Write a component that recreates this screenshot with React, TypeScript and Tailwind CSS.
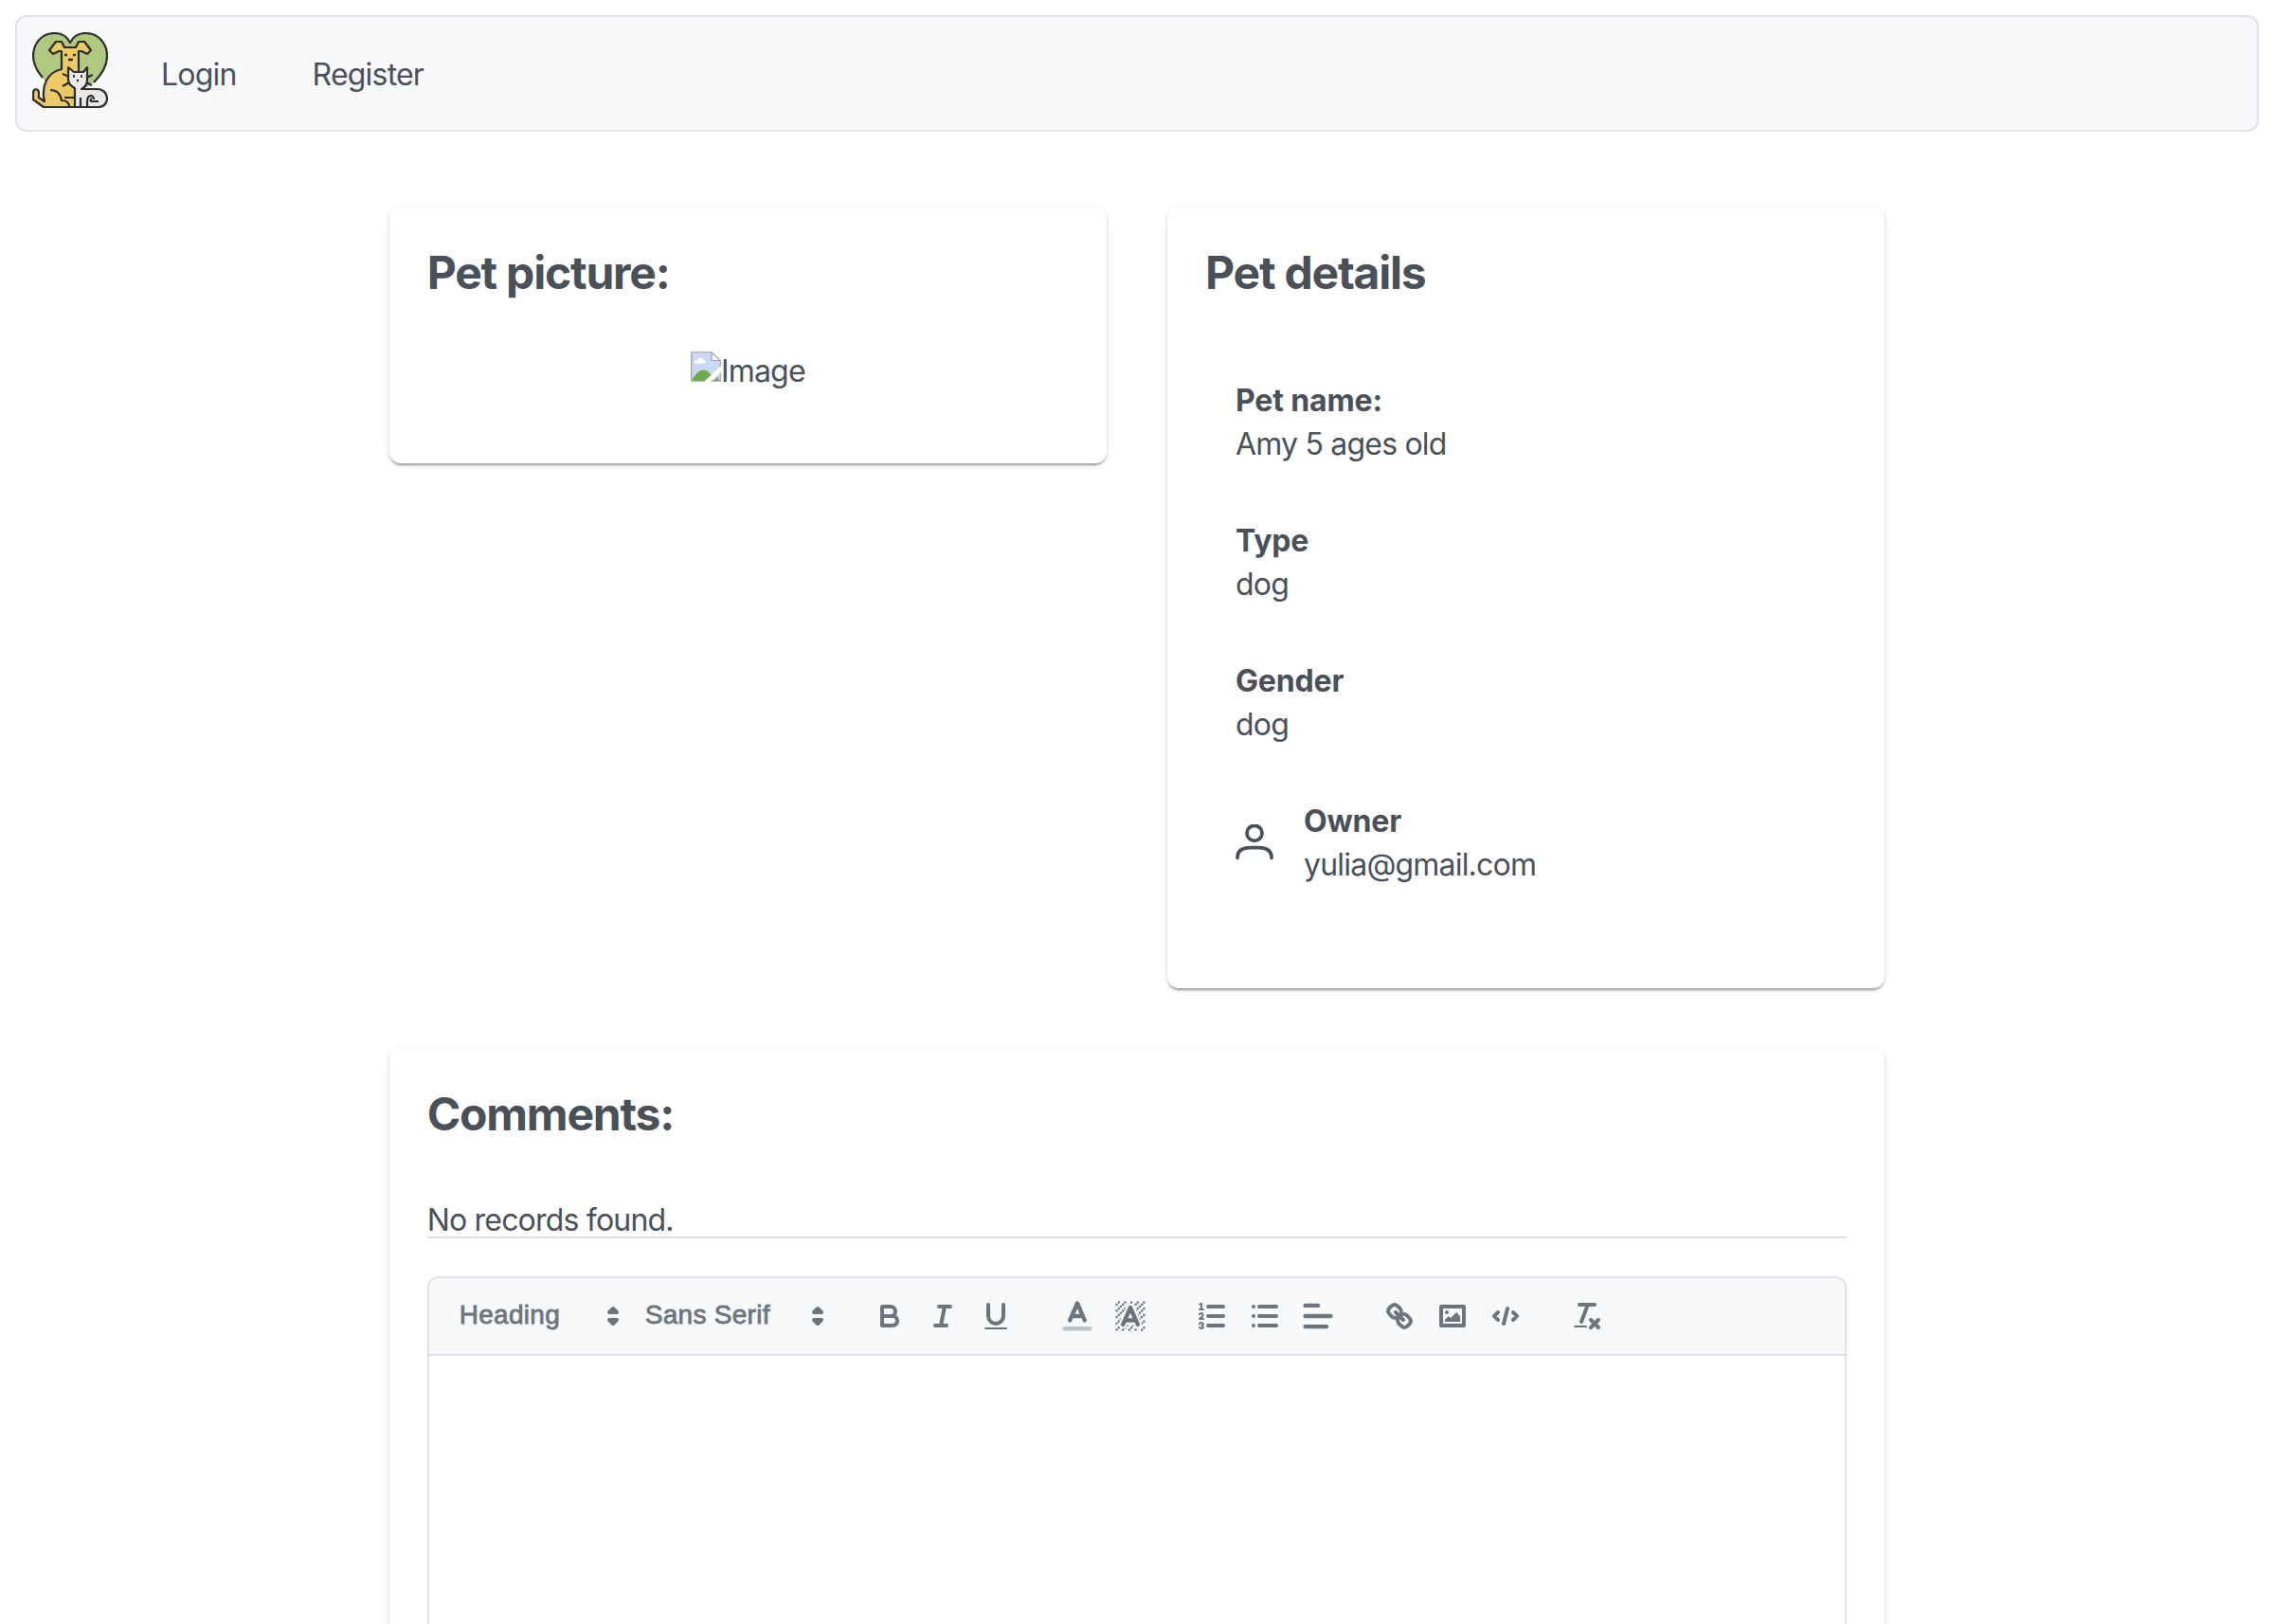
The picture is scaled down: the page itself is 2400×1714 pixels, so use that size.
import React from "react";

const Stroke = ({ children, size = "size-9" }: { children: React.ReactNode; size?: string }) => (
  <svg
    viewBox="0 0 18 18"
    className={`${size} shrink-0`}
    fill="none"
    stroke="currentColor"
    strokeWidth="2"
    strokeLinecap="round"
    strokeLinejoin="round"
  >
    {children}
  </svg>
);

const Fill = ({ children }: { children: React.ReactNode }) => (
  <g fill="currentColor" stroke="none">
    {children}
  </g>
);

const hatch: [number, number][] = [
  [4, 4], [2, 6], [3, 5], [4, 7], [2, 12], [2, 9], [2, 15], [3, 8], [12, 2], [11, 3], [2, 3], [6, 2], [3, 2],
  [5, 3], [9, 2], [15, 14], [13, 7], [15, 5], [14, 6], [15, 8], [14, 9], [14, 3], [15, 2], [12, 5], [13, 4],
  [9, 14], [8, 15], [5, 15], [11, 15], [14, 15], [15, 11],
];

const groups: React.ReactNode[][] = [
  [
    <Stroke key="bold">
      <path d="M5,4H9.5A2.5,2.5,0,0,1,12,6.5v0A2.5,2.5,0,0,1,9.5,9H5V4Z" />
      <path d="M5,9h5.5A2.5,2.5,0,0,1,13,11.5v0A2.5,2.5,0,0,1,10.5,14H5V9Z" />
    </Stroke>,
    <Stroke key="italic">
      <path d="M7 4H13M5 14H11M8 14L10 4" />
    </Stroke>,
    <Stroke key="underline">
      <path d="M5,3V9a4.012,4.012,0,0,0,4,4H9a4.012,4.012,0,0,0,4-4V3" />
      <Fill><rect height="1" rx="0.5" width="12" x="3" y="15" /></Fill>
    </Stroke>,
  ],
  [
    <Stroke key="color" size="size-10">
      <path d="M3 15H15" opacity="0.4" />
      <path d="M5.5 11L9 3L12.5 11M11.63 9H6.38" />
    </Stroke>,
    <Stroke key="background" size="size-10">
      <Fill>
        {hatch.map(([x, y]) => (
          <rect key={`${x}-${y}`} x={x} y={y} width="1" height="1" />
        ))}
        <polygon points="6 6.868 6 6 5 6 5 7 5.942 7 6 6.868" />
        <polygon points="6.817 5 6 5 6 6 6.38 6 6.817 5" />
        <polygon points="4 11.439 4 11 3 11 3 12 3.755 12 4 11.439" />
        <polygon points="4.63 10 4 10 4 11 4.192 11 4.63 10" />
        <path d="M10.832,4.2L11,4.582V4H10.708A1.948,1.948,0,0,1,10.832,4.2Z" />
        <path d="M7,4.582L7.168,4.2A1.929,1.929,0,0,1,7.292,4H7V4.582Z" />
        <path d="M8,13H7.683l-0.351.8a1.933,1.933,0,0,1-.124.2H8V13Z" />
        <path d="M9,3H8V3.282A1.985,1.985,0,0,1,9,3Z" />
        <polygon points="13.447 10.174 13.808 11 14 11 14 10 13.37 10 13.447 10.174" />
        <path d="M3.775,14H3v1H4V14.314A1.97,1.97,0,0,1,3.775,14Z" />
        <polygon points="12 6.868 12 6 11.62 6 12 6.868" />
        <polygon points="12.933 9 13 9 13 8 12.495 8 12.933 9" />
        <path d="M6,14.926V15H7V14.316A1.993,1.993,0,0,1,6,14.926Z" />
        <path d="M10.668,13.8L10.317,13H10v1h0.792A1.947,1.947,0,0,1,10.668,13.8Z" />
        <path d="M14.332,12.2a1.99,1.99,0,0,1,.166.8H15V12H14.245Z" />
      </Fill>
      <path d="M5.5 13L9 5L12.5 13M11.63 11H6.38" />
    </Stroke>,
  ],
  [
    <Stroke key="ordered">
      <path d="M7 4H15M7 9H15M7 14H15" />
      <g strokeWidth="1">
        <path d="M2.5 5.5H4.5" />
        <path d="M4.5,10.5h-2c0-.234,1.85-1.076,1.85-2.234A0.959,0.959,0,0,0,2.5,8.156" />
        <path d="M2.5,14.846a0.959,0.959,0,0,0,1.85-.109A0.7,0.7,0,0,0,3.75,14a0.688,0.688,0,0,0,.6-0.736,0.959,0.959,0,0,0-1.85-.109" />
      </g>
      <Fill>
        <path d="M3.5,6A0.5,0.5,0,0,1,3,5.5V3.085l-0.276.138A0.5,0.5,0,0,1,2.053,3c-0.124-.247-0.023-0.324.224-0.447l1-.5A0.5,0.5,0,0,1,4,2.5v3A0.5,0.5,0,0,1,3.5,6Z" />
      </Fill>
    </Stroke>,
    <Stroke key="bullet">
      <path d="M6 4H15M6 9H15M6 14H15M3 4H3M3 9H3M3 14H3" />
    </Stroke>,
    <Stroke key="align" size="size-10">
      <path d="M3 9H15M3 14H13M3 4H9" />
    </Stroke>,
  ],
  [
    <Stroke key="link">
      <path d="M7 7L11 11" />
      <path d="M8.9,4.577a3.476,3.476,0,0,1,.36,4.679A3.476,3.476,0,0,1,4.577,8.9C3.185,7.5,2.035,6.4,4.217,4.217S7.5,3.185,8.9,4.577Z" />
      <path d="M13.423,9.1a3.476,3.476,0,0,0-4.679-.36,3.476,3.476,0,0,0,.36,4.679c1.392,1.392,2.5,2.542,4.679.36S14.815,10.5,13.423,9.1Z" />
    </Stroke>,
    <Stroke key="image">
      <rect height="10" width="12" x="3" y="4" />
      <Fill>
        <circle cx="6" cy="7" r="1" />
        <polygon points="5 12 5 11 7 9 8 10 11 7 13 9 13 12" />
      </Fill>
    </Stroke>,
    <Stroke key="code">
      <path d="M5 7L3 9L5 11M13 7L15 9L13 11M10 5L8 13" />
    </Stroke>,
  ],
  [
    <Stroke key="clean">
      <path d="M5 3H13M6 12L9.35 3M11 11L15 15M15 11L11 15" />
      <Fill><rect height="1" rx="0.5" width="7" x="2" y="14" /></Fill>
    </Stroke>,
  ],
];

const Picker = ({ label, width }: { label: string; width: string }) => (
  <div className={`${width} flex h-12 items-center justify-between pl-4`}>
    <span className="pb-0.5 font-['Liberation_Sans',sans-serif] text-[28px] leading-[44px] tracking-[0.3px] [-webkit-text-stroke:0.8px_currentColor]">
      {label}
    </span>
    <Stroke>
      <polygon points="7 11 9 13 11 11" fill="currentColor" />
      <polygon points="7 7 9 5 11 7" fill="currentColor" />
    </Stroke>
  </div>
);

const Logo = () => (
  <svg viewBox="0 0 80 80" className="size-20 shrink-0" fill="none" stroke="#2d2d2d" strokeWidth="2.2" strokeLinejoin="round">
    <path
      d="M11 48C5 41 1 33 1 25C1 11 11 1 23.500 1C31 1 37 5 40 11C43 5 49 1 56.500 1C69 1 79 11 79 25C79 35 73 45 65 53L52 62H20Z"
      fill="#afca7e"
      stroke="none"
    />
    <path d="M11 48C5 41 1 33 1 25C1 11 11 1 23.500 1C31 1 37 5 40 11C43 5 49 1 56.500 1C69 1 79 11 79 25C79 35 73 45 65 53" />
    <path
      d="M31 39V20H28L22 23L18 19L25 10H31L34 16H46L49 10H55L62 19L58 23L52 20H49V42L46 79H12L1 71V64C1 59 7 59 7 64V69L13 73C9 57 16 42 31 39Z"
      fill="#eccb66"
    />
    <path d="M19 61C27 61 30 66 31 72C36 72 39 74 39 79M34 69H44" />
    <path
      d="M45 79V59C41 57 38 54 38 50V37L44 42H54L58 37V50C58 55 56 58 52 60H69C75 60 79 65 79 70C79 75 75 79 70 79Z"
      fill="#e9e9eb"
    />
    <path d="M12 79H70M51 79V69M58 79V73C58 66 65 65 65 71M70 73H63C61 73 61 71 63 70" />
    <path d="M39 47L32 44M39 53L32 57M57 48L64 45M57 53L63 56" />
    <path d="M34 24H37M43 24H46M38 29H43M43 46.500H45M51 46.500H53M47 51H49" strokeWidth="2.500" />
  </svg>
);

const BrokenImage = () => (
  <svg viewBox="0 0 32 32" className="mt-0.5 size-8 shrink-0">
    <path d="M1 1H22L31 10V31H1Z" fill="#c8d8f5" />
    <path d="M1 31C4 25 8 19.500 13 19.500C18 19.500 22 23 24 31Z" fill="#6fad4b" />
    <path d="M24 31L28 26.500L30 31Z" fill="#6fad4b" />
    <path d="M4 12.500C3 10 5 9 7 9C8 5 13 5 13 9C15 9 16 10 16 12.500Z" fill="#fff" />
    <path d="M22 1V9H31Z" fill="#fff" />
    <path d="M0.750 0.750H22L31.250 9.500V31.250H0.750ZM22 1V9.500H31" fill="none" stroke="#a0a0a0" strokeWidth="1.200" />
    <path d="M14 32L32 15V22L21 32Z" fill="#fff" />
  </svg>
);

const Card = ({ title, className, children }: { title: string; className: string; children: React.ReactNode }) => (
  <section
    className={`${className} rounded-xl bg-white p-10 shadow-[0_4px_2px_-2px_rgba(0,0,0,0.2),0_2px_2px_0_rgba(0,0,0,0.14),0_2px_6px_0_rgba(0,0,0,0.12)]`}
  >
    <h2 className="text-[48px] leading-[58px] font-bold tracking-[-1.2px]">{title}</h2>
    {children}
  </section>
);

const Detail = ({ label, value }: { label: string; value: string }) => (
  <div className="leading-[46px]">
    <div className="font-bold tracking-[-0.15px]">{label}</div>
    <div>{value}</div>
  </div>
);

export default function App() {
  return (
    <div className="h-[1714px] overflow-hidden bg-white p-4 font-[Inter,sans-serif] text-[32px] tracking-[-0.8px] text-[#495057]">
      <nav className="flex h-[123px] items-start rounded-xl border-2 border-[#dfe2e8] bg-[#f8f9fb] p-4">
        <Logo />
        <div className="ml-14 flex gap-20 pt-[25px] leading-[40px]">
          <a>Login</a>
          <a>Register</a>
        </div>
      </nav>

      <main className="mx-auto mt-20 grid w-2/3 grid-cols-2 items-start gap-16">
        <Card title="Pet picture:" className="h-[270px]">
          <div className="mt-[52px] flex justify-center">
            <BrokenImage />
            <span className="leading-[46px]">Image</span>
          </div>
        </Card>

        <Card title="Pet details" className="h-[824px]">
          <div className="mt-[83px] flex flex-col gap-14 px-8">
            <Detail label="Pet name:" value="Amy 5 ages old" />
            <Detail label="Type" value="dog" />
            <Detail label="Gender" value="dog" />
            <div className="flex items-center gap-8">
              <svg viewBox="0 0 40 40" className="size-10 shrink-0" fill="none" stroke="currentColor" strokeWidth="3.7" strokeLinecap="round">
                <circle cx="20" cy="9.300" r="8" />
                <path d="M2 35.300C2 27 8 24.700 16 24.700H24C32 24.700 38 27 38 35.300" />
              </svg>
              <Detail label="Owner" value="yulia@gmail.com" />
            </div>
          </div>
        </Card>

        <Card title="Comments:" className="col-span-2 h-[800px]">
          <div className="mt-[65px] border-b-2 border-[#dee2e6] leading-[35px]">No records found.</div>
          <div className="mt-10 h-[640px] rounded-xl border-2 border-[#dfe2e8]">
            <div className="flex h-[82px] gap-[30px] rounded-t-[10px] border-b-2 border-[#dfe2e8] bg-[#f8f9fb] p-4 text-[#6c757d]">
              <div className="flex">
                <Picker label="Heading" width="w-[196px]" />
                <Picker label="Sans Serif" width="w-[216px]" />
              </div>
              {groups.map((icons, g) => (
                <div key={g} className="flex">
                  {icons.map((icon, i) => (
                    <button key={i} className="flex h-12 w-14 items-center justify-center">
                      {icon}
                    </button>
                  ))}
                </div>
              ))}
            </div>
          </div>
        </Card>
      </main>
    </div>
  );
}
